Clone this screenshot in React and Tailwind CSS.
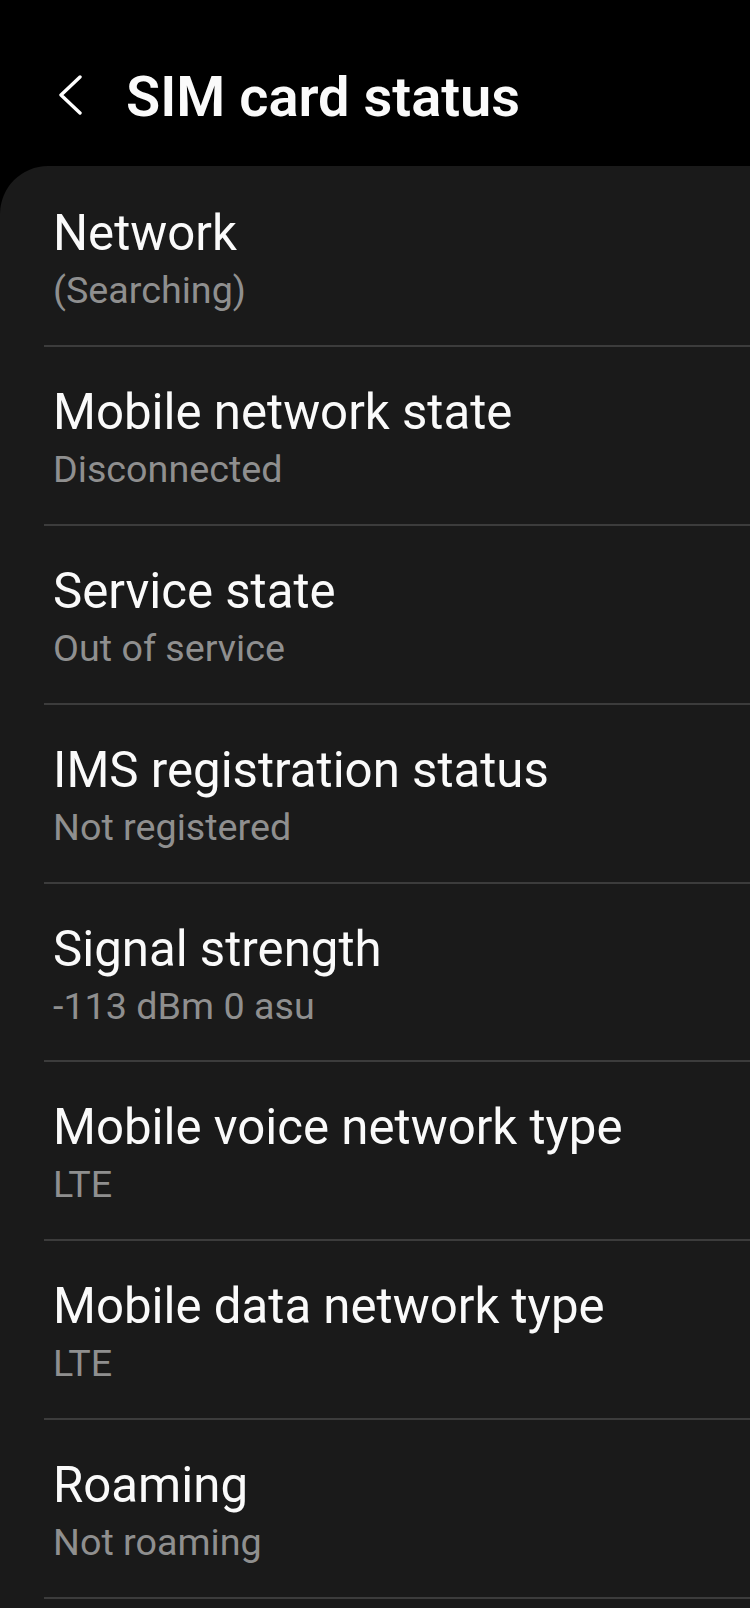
import React from "react";

const rows = [
  ["Network", "(Searching)"],
  ["Mobile network state", "Disconnected"],
  ["Service state", "Out of service"],
  ["IMS registration status", "Not registered"],
  ["Signal strength", "-113 dBm 0 asu"],
  ["Mobile voice network type", "LTE"],
  ["Mobile data network type", "LTE"],
  ["Roaming", "Not roaming"],
];

export default function App() {
  return (
    <div
      className="w-[750px] h-[1608px] overflow-hidden bg-black"
      style={{ fontFamily: "Roboto, 'Noto Sans', sans-serif" }}
    >
      <div className="h-[166px] pt-[65px] flex items-start">
        <div className="w-[126px] h-[64px] flex items-center">
          <svg
            className="ml-[57px] mt-[-4px]"
            width="26"
            height="40"
            viewBox="0 0 26 40"
            fill="none"
          >
            <path
              d="M23 2 L4 20 L23 38"
              stroke="#ffffff"
              strokeWidth="3.4"
              strokeLinecap="round"
              strokeLinejoin="round"
            />
          </svg>
        </div>
        <div className="text-[56px] leading-[64px] font-semibold text-[#fafafa]">
          SIM card status
        </div>
      </div>
      <div className="bg-[#1a1a1a] rounded-tl-[48px] pt-[2.4px] h-[1442px]">
        {rows.map(([t, s]) => (
          <div key={t}>
            <div className="pl-[53px] pt-[36px] pb-[32.8px]">
              <div className="text-[49.2px] leading-[58px] text-[#fafafa]">{t}</div>
              <div className="mt-[6px] text-[37.7px] leading-[44px] text-[#8f8f8f]">{s}</div>
            </div>
            <div className="ml-[44px] h-[2px] bg-[#3c3c3c]" />
          </div>
        ))}
      </div>
    </div>
  );
}
